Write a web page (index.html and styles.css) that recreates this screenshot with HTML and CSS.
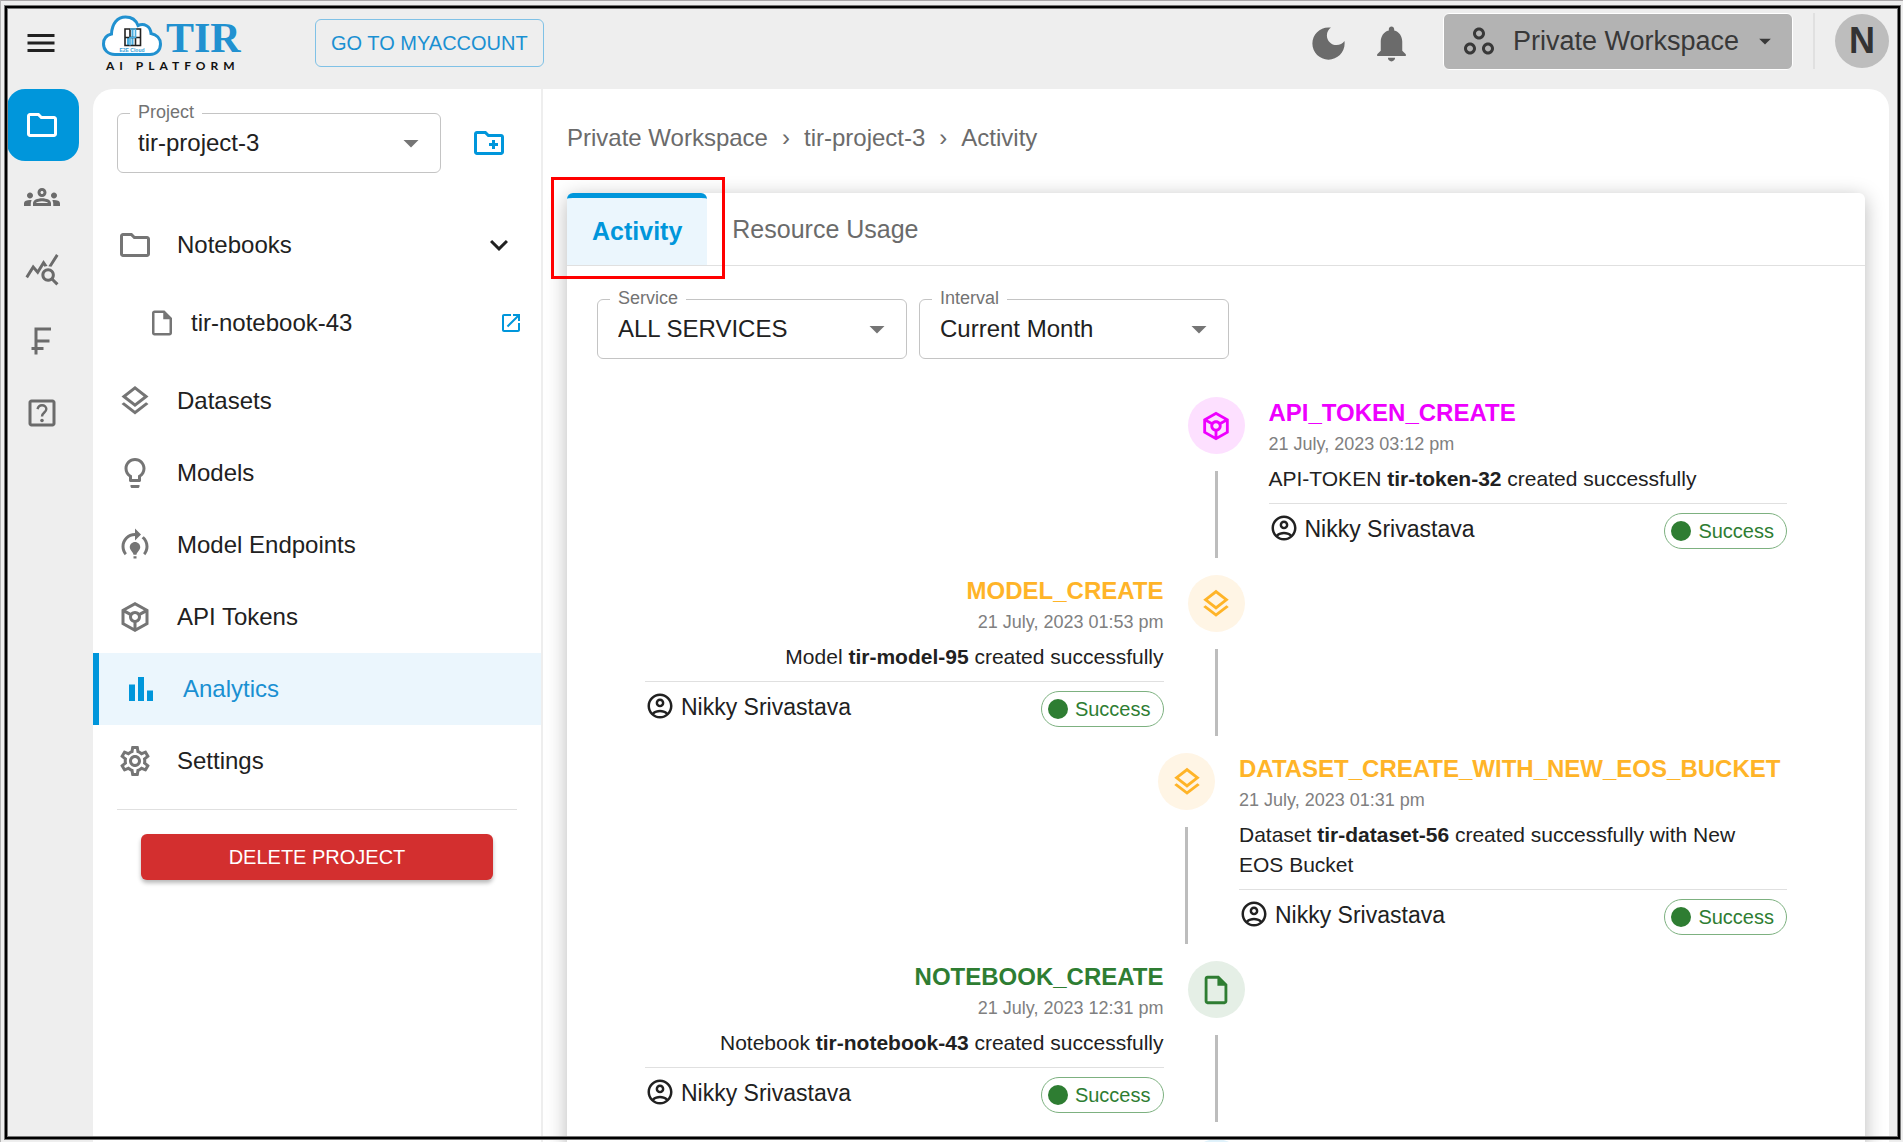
FILE: index.html
```html
<!DOCTYPE html>
<html lang="en">
<head>
<meta charset="utf-8">
<meta name="viewport" content="width=device-width, initial-scale=1">
<title>TIR AI Platform - Activity</title>
<link rel="stylesheet" href="styles.css">
</head>
<body>
<svg class="sprite" aria-hidden="true">
  <symbol id="i-menu" viewBox="0 0 24 24"><path d="M3 18h18v-2H3v2zm0-5h18v-2H3v2zm0-7v2h18V6H3z"/></symbol>
  <symbol id="i-folder" viewBox="0 0 24 24"><path d="M9.17 6l2 2H20v10H4V6h5.17M10 4H4c-1.1 0-1.99.9-1.99 2L2 18c0 1.1.9 2 2 2h16c1.1 0 2-.9 2-2V8c0-1.1-.9-2-2-2h-8l-2-2z"/></symbol>
  <symbol id="i-folder-add" viewBox="0 0 24 24"><path d="M20 6h-8l-2-2H4c-1.11 0-1.99.89-1.99 2L2 18c0 1.11.89 2 2 2h16c1.11 0 2-.89 2-2V8c0-1.11-.89-2-2-2zm0 12H4V6h5.17l2 2H20v10zm-8-4h2v2h2v-2h2v-2h-2v-2h-2v2h-2z"/></symbol>
  <symbol id="i-groups" viewBox="0 0 24 24"><path d="M4 13c1.1 0 2-.9 2-2s-.9-2-2-2-2 .9-2 2 .9 2 2 2zm1.13 1.1c-.37-.06-.74-.1-1.13-.1-.99 0-1.93.21-2.78.58C.48 14.9 0 15.62 0 16.43V18h4.5v-1.61c0-.83.23-1.61.63-2.29zM20 13c1.1 0 2-.9 2-2s-.9-2-2-2-2 .9-2 2 .9 2 2 2zm4 3.43c0-.81-.48-1.53-1.22-1.85-.85-.37-1.79-.58-2.78-.58-.39 0-.76.04-1.13.1.4.68.63 1.46.63 2.29V18H24v-1.57zm-7.76-2.78c-1.17-.52-2.61-.9-4.24-.9-1.63 0-3.07.39-4.24.9C6.68 14.13 6 15.21 6 16.39V18h12v-1.61c0-1.18-.68-2.26-1.76-2.74zM8.07 16c.09-.23.13-.39.91-.69.97-.38 1.99-.56 3.02-.56s2.05.18 3.02.56c.77.3.81.46.91.69H8.07zM12 8c.55 0 1 .45 1 1s-.45 1-1 1-1-.45-1-1 .45-1 1-1m0-2c-1.66 0-3 1.34-3 3s1.34 3 3 3 3-1.34 3-3-1.34-3-3-3z"/></symbol>
  <symbol id="i-stats" viewBox="0 0 24 24"><path d="M19.88 18.47c.44-.7.7-1.51.7-2.39 0-2.49-2.01-4.5-4.5-4.5s-4.5 2.01-4.5 4.5 2.01 4.5 4.49 4.5c.88 0 1.7-.26 2.39-.7L21.58 23 23 21.58l-3.12-3.11zm-3.8.11c-1.38 0-2.5-1.12-2.5-2.5s1.12-2.5 2.5-2.5 2.5 1.12 2.5 2.5-1.12 2.5-2.5 2.5zm-.36-8.5c-.74.02-1.45.18-2.1.45l-.55-.83-3.8 6.18-3.01-3.52-3.63 5.81L1 17l5-8 3 3.5L13 6l2.72 4.08zm2.59.5c-.64-.28-1.33-.45-2.05-.49L21.38 2 23 3.18l-4.69 7.4z"/></symbol>
  <symbol id="i-franc" viewBox="0 0 24 24"><path d="M18 5V3H7v13H5v2h2v3h2v-3h4v-2H9v-3h8v-2H9V5h9z"/></symbol>
  <symbol id="i-help" viewBox="0 0 24 24"><path d="M19 3H5c-1.1 0-2 .9-2 2v14c0 1.1.9 2 2 2h14c1.1 0 2-.9 2-2V5c0-1.1-.9-2-2-2zm0 16H5V5h14v14z"/><circle cx="12" cy="17" r="1.2"/><path d="M9 9.4c.4-1.6 1.5-2.6 3-2.6 1.7 0 2.9 1.1 2.9 2.6 0 2.2-2.9 2.4-2.9 4.9" fill="none" stroke="currentColor" stroke-width="1.6"/></symbol>
  <symbol id="i-file" viewBox="0 0 24 24"><path d="M14 2H6c-1.1 0-1.99.9-1.99 2L4 20c0 1.1.89 2 1.99 2H18c1.1 0 2-.9 2-2V8l-6-6zM6 20V4h7v5h5v11H6z"/></symbol>
  <symbol id="i-open" viewBox="0 0 24 24"><path d="M19 19H5V5h7V3H5c-1.11 0-2 .9-2 2v14c0 1.1.89 2 2 2h14c1.1 0 2-.9 2-2v-7h-2v7zM14 3v2h3.59l-9.83 9.83 1.41 1.41L19 6.41V10h2V3h-7z"/></symbol>
  <symbol id="i-layers" viewBox="0 0 24 24"><path d="M11.99 18.54l-7.37-5.73L3 14.07l9 7 9-7-1.63-1.27zM12 16l7.36-5.73L21 9l-9-7-9 7 1.63 1.27L12 16zm0-11.47L17.74 9 12 13.47 6.26 9 12 4.53z"/></symbol>
  <symbol id="i-bulb" viewBox="0 0 24 24"><path d="M9 21c0 .55.45 1 1 1h4c.55 0 1-.45 1-1v-1H9v1zm3-19C8.14 2 5 5.14 5 9c0 2.38 1.19 4.47 3 5.74V17c0 .55.45 1 1 1h6c.55 0 1-.45 1-1v-2.26c1.81-1.27 3-3.36 3-5.74 0-3.86-3.14-7-7-7zm2.85 11.1l-.85.6V16h-4v-2.3l-.85-.6C7.8 12.16 7 10.63 7 9c0-2.76 2.24-5 5-5s5 2.24 5 5c0 1.63-.8 3.16-2.15 4.1z"/></symbol>
  <symbol id="i-training" viewBox="0 0 24 24"><path d="M15.5 13.5c0 2-2.5 3.5-2.5 5h-2c0-1.5-2.5-3-2.5-5 0-1.93 1.57-3.5 3.5-3.5s3.5 1.57 3.5 3.5zm-2.5 6h-2V21h2v-1.5zm6-6.5c0 1.68-.59 3.21-1.58 4.42l1.42 1.42C20.18 17.27 21 15.23 21 13c0-2.74-1.23-5.19-3.16-6.84l-1.42 1.42C17.99 8.86 19 10.82 19 13zm-3-8l-4-4v3c-4.97 0-9 4.03-9 9 0 2.23.82 4.27 2.16 5.84l1.42-1.42C5.59 16.21 5 14.68 5 13c0-3.86 3.14-7 7-7v3l4-4z"/></symbol>
  <symbol id="i-token" viewBox="0 0 24 24"><path d="M21 7 12 2 3 7v10l9 5 9-5V7zm-9-2.71 5.91 3.28-3.01 1.67C14.17 8.48 13.14 8 12 8s-2.17.48-2.9 1.24L6.09 7.57 12 4.29zm-1 14.87-6-3.33V9.26L8.13 11c-.08.31-.13.65-.13 1 0 1.86 1.27 3.43 3 3.87v3.29zM10 12c0-1.1.9-2 2-2s2 .9 2 2-.9 2-2 2-2-.9-2-2zm3 7.16v-3.28c1.73-.44 3-2.01 3-3.87 0-.35-.05-.69-.13-1.01L19 9.26v6.57l-6 3.33z"/></symbol>
  <symbol id="i-bars" viewBox="0 0 24 24"><path d="M4 9h4v11H4zM16 13h4v7h-4zM10 4h4v16h-4z"/></symbol>
  <symbol id="i-gear" viewBox="0 0 24 24"><path d="M19.43 12.98c.04-.32.07-.64.07-.98 0-.34-.03-.66-.07-.98l2.11-1.65c.19-.15.24-.42.12-.64l-2-3.46c-.09-.16-.26-.25-.44-.25-.06 0-.12.01-.17.03l-2.49 1c-.52-.4-1.08-.73-1.69-.98l-.38-2.65C14.46 2.18 14.25 2 14 2h-4c-.25 0-.46.18-.49.42l-.38 2.65c-.61.25-1.17.59-1.69.98l-2.49-1c-.06-.02-.12-.03-.18-.03-.17 0-.34.09-.43.25l-2 3.46c-.13.22-.07.49.12.64l2.11 1.65c-.04.32-.07.65-.07.98 0 .33.03.66.07.98l-2.11 1.65c-.19.15-.24.42-.12.64l2 3.46c.09.16.26.25.44.25.06 0 .12-.01.17-.03l2.49-1c.52.4 1.08.73 1.69.98l.38 2.65c.03.24.24.42.49.42h4c.25 0 .46-.18.49-.42l.38-2.65c.61-.25 1.17-.59 1.69-.98l2.49 1c.06.02.12.03.18.03.17 0 .34-.09.43-.25l2-3.46c.12-.22.07-.49-.12-.64l-2.11-1.65zm-1.98-1.71c.04.31.05.52.05.73 0 .21-.02.43-.05.73l-.14 1.13.89.7 1.08.84-.7 1.21-1.27-.51-1.04-.42-.9.68c-.43.32-.84.56-1.25.73l-1.06.43-.16 1.13-.2 1.35h-1.4l-.19-1.35-.16-1.13-1.06-.43c-.43-.18-.83-.41-1.23-.71l-.91-.7-1.06.43-1.27.51-.7-1.21 1.08-.84.89-.7-.14-1.13c-.03-.31-.05-.54-.05-.74s.02-.43.05-.73l.14-1.13-.89-.7-1.08-.84.7-1.21 1.27.51 1.04.42.9-.68c.43-.32.84-.56 1.25-.73l1.06-.43.16-1.13.2-1.35h1.39l.19 1.35.16 1.13 1.06.43c.43.18.83.41 1.23.71l.91.7 1.06-.43 1.27-.51.7 1.21-1.07.85-.89.7.14 1.13zM12 8c-2.21 0-4 1.79-4 4s1.79 4 4 4 4-1.79 4-4-1.79-4-4-4zm0 6c-1.1 0-2-.9-2-2s.9-2 2-2 2 .9 2 2-.9 2-2 2z"/></symbol>
  <symbol id="i-chevron" viewBox="0 0 24 24"><path d="M7.41 8.59 12 13.17l4.59-4.58L18 10l-6 6-6-6 1.41-1.41z"/></symbol>
  <symbol id="i-drop" viewBox="0 0 24 24"><path d="M7 10l5 5 5-5z"/></symbol>
  <symbol id="i-moon" viewBox="0 0 24 24"><path d="M12 3c-4.97 0-9 4.03-9 9s4.03 9 9 9 9-4.03 9-9c0-.46-.04-.92-.1-1.36-.98 1.37-2.58 2.26-4.4 2.26-2.98 0-5.4-2.42-5.4-5.4 0-1.81.89-3.42 2.26-4.4-.44-.06-.9-.1-1.36-.1z"/></symbol>
  <symbol id="i-bell" viewBox="0 0 24 24"><path d="M12 22c1.1 0 2-.9 2-2h-4c0 1.1.89 2 2 2zm6-6v-5c0-3.07-1.64-5.64-4.5-6.32V4c0-.83-.67-1.5-1.5-1.5s-1.5.67-1.5 1.5v.68C7.63 5.36 6 7.92 6 11v5l-2 2v1h16v-1l-2-2z"/></symbol>
  <symbol id="i-spaces" viewBox="0 0 24 24"><path d="M6 15c1.1 0 2 .9 2 2s-.9 2-2 2-2-.9-2-2 .9-2 2-2m0-2c-2.2 0-4 1.8-4 4s1.8 4 4 4 4-1.8 4-4-1.8-4-4-4zm6-8c1.1 0 2 .9 2 2s-.9 2-2 2-2-.9-2-2 .9-2 2-2m0-2C9.8 3 8 4.8 8 7s1.8 4 4 4 4-1.8 4-4-1.8-4-4-4zm6 12c1.1 0 2 .9 2 2s-.9 2-2 2-2-.9-2-2 .9-2 2-2m0-2c-2.2 0-4 1.8-4 4s1.8 4 4 4 4-1.8 4-4-1.8-4-4-4z"/></symbol>
  <symbol id="i-user" viewBox="0 0 24 24"><path d="M12 2C6.48 2 2 6.48 2 12s4.48 10 10 10 10-4.48 10-10S17.52 2 12 2zM7.35 18.5C8.66 17.56 10.26 17 12 17s3.34.56 4.65 1.5c-1.31.94-2.91 1.5-4.65 1.5s-3.34-.56-4.65-1.5zm10.79-1.38C16.45 15.8 14.32 15 12 15s-4.45.8-6.14 2.12C4.7 15.73 4 13.95 4 12c0-4.42 3.58-8 8-8s8 3.58 8 8c0 1.95-.7 3.73-1.86 5.12zM12 6c-1.93 0-3.5 1.57-3.5 3.5S10.07 13 12 13s3.5-1.57 3.5-3.5S13.93 6 12 6zm0 5c-.83 0-1.5-.67-1.5-1.5S11.17 8 12 8s1.5.67 1.5 1.5S12.83 11 12 11z"/></symbol>
</svg>

<div class="app">
  <header class="topbar">
    <button class="icon-btn menu-btn" type="button" aria-label="Menu"><svg class="icon"><use href="#i-menu"/></svg></button>
    <a class="logo" href="#" aria-label="TIR AI Platform">
      <svg viewBox="0 0 146 60" width="146" height="60">
        <path d="M14 41.5C6.500 41.5 2.500 36.5 2.500 31c0-5.500 3.500-9 8-10C11 10.5 16.500 4 24.500 4c6 0 10.500 3 12.500 8.500 6-2.500 12.500.5 13 8 5.500 1 9.500 5 9.500 10.500 0 6-4 10.500-10.500 10.500z" fill="#fff" stroke="#2191d0" stroke-width="3"/>
        <path d="M31.500 16v16.500M27 24.500v8" stroke="#4aaee0" stroke-width="2"/>
        <path d="M24 16h15.500v16.500H24zM24 24.500h15.500M29 16v8.500M34.500 24.500v8" fill="none" stroke="#222" stroke-width="1.600"/>
        <path d="M29 16h5.500v8.500H29v8" fill="none" stroke="#4aaee0" stroke-width="1.600"/>
        <text class="logo-tiny" x="31" y="39" text-anchor="middle">E2E Cloud</text>
        <text class="logo-name" x="65" y="39">TIR</text>
        <text class="logo-sub" x="5" y="57">AI PLATFORM</text>
      </svg>
    </a>
    <a class="account-link" href="#">GO TO MYACCOUNT</a>
    <div class="tools">
      <button class="icon-btn" type="button" aria-label="Dark mode"><svg class="icon icon-lg"><use href="#i-moon"/></svg></button>
      <button class="icon-btn" type="button" aria-label="Notifications"><svg class="icon icon-lg"><use href="#i-bell"/></svg></button>
      <button class="workspace" type="button"><svg class="icon"><use href="#i-spaces"/></svg><span>Private Workspace</span><svg class="icon icon-sm"><use href="#i-drop"/></svg></button>
      <span class="rule"></span>
      <button class="avatar" type="button" aria-label="Account N">N</button>
    </div>
  </header>

  <div class="body">
    <nav class="rail" aria-label="Sections">
      <a class="rail-item active" href="#" aria-label="Projects"><svg class="icon"><use href="#i-folder"/></svg></a>
      <a class="rail-item" href="#" aria-label="Teams"><svg class="icon"><use href="#i-groups"/></svg></a>
      <a class="rail-item" href="#" aria-label="Usage"><svg class="icon"><use href="#i-stats"/></svg></a>
      <a class="rail-item" href="#" aria-label="Billing"><svg class="icon"><use href="#i-franc"/></svg></a>
      <a class="rail-item" href="#" aria-label="Help"><svg class="icon"><use href="#i-help"/></svg></a>
    </nav>

    <div class="panel">
      <aside class="sidebar">
        <div class="project">
          <div class="field">
            <label for="project">Project</label>
            <select id="project"><option>tir-project-3</option></select>
            <svg class="icon"><use href="#i-drop"/></svg>
          </div>
          <button class="icon-btn accent" type="button" aria-label="New project"><svg class="icon"><use href="#i-folder-add"/></svg></button>
        </div>
        <nav class="menu" aria-label="Project">
          <a class="menu-item" href="#"><svg class="icon"><use href="#i-folder"/></svg><span>Notebooks</span><svg class="icon dark"><use href="#i-chevron"/></svg></a>
          <a class="menu-item sub" href="#"><svg class="icon icon-md"><use href="#i-file"/></svg><span>tir-notebook-43</span><svg class="icon icon-xs accent"><use href="#i-open"/></svg></a>
          <a class="menu-item" href="#"><svg class="icon"><use href="#i-layers"/></svg><span>Datasets</span></a>
          <a class="menu-item" href="#"><svg class="icon"><use href="#i-bulb"/></svg><span>Models</span></a>
          <a class="menu-item" href="#"><svg class="icon"><use href="#i-training"/></svg><span>Model Endpoints</span></a>
          <a class="menu-item" href="#"><svg class="icon"><use href="#i-token"/></svg><span>API Tokens</span></a>
          <a class="menu-item active" href="#"><svg class="icon"><use href="#i-bars"/></svg><span>Analytics</span></a>
          <a class="menu-item" href="#"><svg class="icon"><use href="#i-gear"/></svg><span>Settings</span></a>
        </nav>
        <div class="danger">
          <button class="delete" type="button">DELETE PROJECT</button>
        </div>
      </aside>

      <main class="main">
        <nav class="crumbs" aria-label="Breadcrumb"><a href="#">Private Workspace</a><span>›</span><a href="#">tir-project-3</a><span>›</span><a href="#">Activity</a></nav>
        <section class="card">
          <div class="tabs" role="tablist">
            <button class="tab active" type="button" role="tab" aria-selected="true">Activity</button>
            <button class="tab" type="button" role="tab" aria-selected="false">Resource Usage</button>
            <span class="marker"></span>
          </div>
          <div class="filters">
            <div class="field">
              <label for="service">Service</label>
              <select id="service"><option>ALL SERVICES</option></select>
              <svg class="icon"><use href="#i-drop"/></svg>
            </div>
            <div class="field">
              <label for="interval">Interval</label>
              <select id="interval"><option>Current Month</option></select>
              <svg class="icon"><use href="#i-drop"/></svg>
            </div>
          </div>

          <ol class="timeline">
            <li class="event pink">
              <div class="track"><span class="dot"><svg class="icon"><use href="#i-token"/></svg></span><span class="line"></span></div>
              <article class="entry">
                <h3>API_TOKEN_CREATE</h3>
                <time>21 July, 2023 03:12 pm</time>
                <p>API-TOKEN <b>tir-token-32</b> created successfully</p>
                <footer><svg class="icon icon-md"><use href="#i-user"/></svg><span class="who">Nikky Srivastava</span><span class="chip">Success</span></footer>
              </article>
            </li>
            <li class="event amber left">
              <div class="track"><span class="dot"><svg class="icon"><use href="#i-layers"/></svg></span><span class="line"></span></div>
              <article class="entry">
                <h3>MODEL_CREATE</h3>
                <time>21 July, 2023 01:53 pm</time>
                <p>Model <b>tir-model-95</b> created successfully</p>
                <footer><svg class="icon icon-md"><use href="#i-user"/></svg><span class="who">Nikky Srivastava</span><span class="chip">Success</span></footer>
              </article>
            </li>
            <li class="event amber wide">
              <div class="track"><span class="dot"><svg class="icon"><use href="#i-layers"/></svg></span><span class="line"></span></div>
              <article class="entry">
                <h3>DATASET_CREATE_WITH_NEW_EOS_BUCKET</h3>
                <time>21 July, 2023 01:31 pm</time>
                <p>Dataset <b>tir-dataset-56</b> created successfully with New<br>EOS Bucket</p>
                <footer><svg class="icon icon-md"><use href="#i-user"/></svg><span class="who">Nikky Srivastava</span><span class="chip">Success</span></footer>
              </article>
            </li>
            <li class="event green left">
              <div class="track"><span class="dot"><svg class="icon"><use href="#i-file"/></svg></span><span class="line"></span></div>
              <article class="entry">
                <h3>NOTEBOOK_CREATE</h3>
                <time>21 July, 2023 12:31 pm</time>
                <p>Notebook <b>tir-notebook-43</b> created successfully</p>
                <footer><svg class="icon icon-md"><use href="#i-user"/></svg><span class="who">Nikky Srivastava</span><span class="chip">Success</span></footer>
              </article>
            </li>
            <li class="event blue">
              <div class="track"><span class="dot"><svg class="icon"><use href="#i-folder"/></svg></span><span class="line"></span></div>
              <div class="entry"></div>
            </li>
          </ol>
        </section>
      </main>
    </div>
  </div>
</div>
<div class="frame" aria-hidden="true"></div>
</body>
</html>
```
FILE: styles.css
```css
:root {
  --blue: #0096db;
  --text: #212121;
  --muted: #6b6b6b;
  --line: #e0e0e0;
  --gray: #eeeeee;
  --green: #2e7d32;
}

* { box-sizing: border-box; }

body {
  margin: 0;
  background: var(--gray);
  color: var(--text);
  font-family: "Liberation Sans", Arial, sans-serif;
  font-size: 24px;
}

a { color: inherit; text-decoration: none; }
button { font: inherit; color: inherit; border: 0; background: none; padding: 0; cursor: pointer; }

.sprite { display: none; }
.icon { width: 36px; height: 36px; flex: none; display: block; fill: currentColor; }
.icon-lg { width: 43px; height: 43px; }
.icon-md { width: 30px; height: 30px; }
.icon-sm { width: 28px; height: 28px; }
.icon-xs { width: 24px; height: 24px; }
.accent { color: var(--blue); }
.dark { color: var(--text); }

.app {
  height: 100vh;
  overflow: hidden;
  display: flex;
  flex-direction: column;
  border-top: 1px solid #a9a6a8;
  border-left: 1px solid #b5b5b5;
}

/* Top bar */
.topbar {
  flex: none;
  height: 88px;
  padding: 0 14px 4px 22px;
  display: flex;
  align-items: center;
}
.logo { margin-left: 42px; display: block; }
.logo svg { display: block; }
.logo-tiny { font: bold 5px "Liberation Sans", sans-serif; fill: #3a9fd8; }
.logo-name { font: bold 42px "Liberation Serif", serif; fill: #2191d0; }
.logo-sub { font: bold 12px Lato, sans-serif; letter-spacing: 5px; fill: #111; }
.account-link {
  margin-left: 68px;
  height: 48px;
  padding: 0 15px;
  display: flex;
  align-items: center;
  border: 1px solid #7fc1e6;
  border-radius: 6px;
  color: #1a90d2;
  font-size: 20px;
}
.tools { margin: 0 0 4px auto; display: flex; align-items: center; gap: 20px; }
.workspace {
  height: 57px;
  margin-left: 10px;
  padding: 0 17px;
  display: flex;
  align-items: center;
  gap: 16px;
  border: 1px solid #fff;
  border-radius: 6px;
  background: #b3b3b3;
  color: #383838;
  font-size: 27px;
}
.tools > .icon-btn { color: #6b6b6b; padding-top: 4px; }
.workspace .icon-sm { margin-right: -4px; margin-left: -4px; }
.rule { width: 2px; height: 56px; background: var(--line); }
.avatar {
  width: 54px;
  height: 54px;
  border-radius: 50%;
  background: #bdbdbd;
  color: #333;
  font-size: 36px;
  font-weight: bold;
}

/* Rail and panel */
.body { flex: 1; min-height: 0; display: flex; padding-right: 14px; }
.rail { width: 92px; flex: none; padding-left: 6px; color: #6b6b6b; }
.rail-item { width: 72px; height: 72px; padding-right: 2px; display: grid; place-items: center; }
.rail-item.active { background: var(--blue); color: #fff; border-radius: 18px; }
.panel {
  flex: 1;
  min-width: 0;
  display: flex;
  background: #fff;
  border-radius: 20px 20px 0 0;
}

/* Sidebar */
.sidebar { width: 450px; flex: none; padding-top: 24px; border-right: 2px solid var(--gray); }
.project { display: flex; align-items: center; padding: 0 34px 0 24px; justify-content: space-between; }
.project .field { width: 324px; }

.field { position: relative; display: grid; align-items: center; }
.field label {
  position: absolute;
  top: -11px;
  left: 13px;
  padding: 0 8px;
  background: #fff;
  color: #737373;
  font-size: 18px;
  line-height: 20px;
}
.field select {
  grid-area: 1 / 1;
  width: 100%;
  height: 60px;
  padding: 0 48px 2px 20px;
  border: 1px solid #c4c4c4;
  border-radius: 6px;
  background: none;
  color: var(--text);
  font: inherit;
  appearance: none;
}
.field .icon { grid-area: 1 / 1; justify-self: end; margin-right: 12px; color: #757575; pointer-events: none; }

.menu { margin-top: 36px; }
.menu-item {
  height: 72px;
  padding: 0 24px;
  display: flex;
  align-items: center;
  gap: 24px;
}
.menu-item > .icon:first-child { color: #757575; }
.menu-item span { flex: 1; }
.menu-item.sub { height: 84px; padding: 0 18px 0 54px; gap: 14px; }
.menu-item.active { border-left: 6px solid var(--blue); background: #ebf6fd; color: #1a90d2; }
.menu-item.active > .icon:first-child { color: var(--blue); }
.danger { margin: 12px 24px 0; padding: 24px; border-top: 1px solid var(--line); }
.delete {
  width: 100%;
  height: 46px;
  border-radius: 6px;
  background: #d32f2f;
  color: #fff;
  font-size: 20px;
  box-shadow: 0 3px 4px rgba(0, 0, 0, .28);
}

/* Main */
.main { flex: 1; min-width: 0; padding: 31px 24px 0; }
.crumbs { display: flex; gap: 14px; line-height: 36px; color: #6b6b6b; }
.card {
  margin-top: 37px;
  border-radius: 6px;
  background: #fff;
  box-shadow: 0 4px 20px rgba(0, 0, 0, .28);
}
.tabs { position: relative; display: flex; height: 73px; border-bottom: 1px solid var(--line); font-size: 25px; }
.tab { padding: 0 25px; color: #6b6b6b; }
.tab.active {
  border-top: 5px solid var(--blue);
  border-radius: 6px 6px 0 0;
  background: #ebf6fd;
  color: var(--blue);
  font-weight: bold;
}
.marker {
  position: absolute;
  top: -16px;
  left: -16px;
  width: 174px;
  height: 102px;
  border: 3px solid #f00;
}
.filters { display: flex; gap: 12px; padding: 33px 30px 0; }
.filters .field { width: 310px; }

/* Timeline */
.timeline { list-style: none; margin: 0; padding: 21px 54px 0; }
.event { display: flex; }
.event::before { content: ""; flex: 1; padding: 0 24px; }
.event.left { flex-direction: row-reverse; }
.track { display: flex; flex-direction: column; align-items: center; }
.dot {
  width: 57px;
  height: 57px;
  margin: 17px 0;
  border-radius: 50%;
  display: grid;
  place-items: center;
}
.dot .icon { width: 34px; height: 34px; }
.line { flex: 1; width: 3px; background: #bdbdbd; }
.entry { flex: 1; padding: 15px 24px 9px; }
.wide .entry { min-width: 596px; }
.entry h3 { margin: 0; font-size: 24px; line-height: 36px; }
.entry time { display: block; color: #808080; font-size: 18px; line-height: 26px; }
.entry p { margin: 7px 0 9px; font-size: 21px; line-height: 30px; }
.entry footer {
  display: flex;
  align-items: flex-start;
  gap: 6px;
  padding-top: 9px;
  border-top: 1px solid var(--line);
}
.left h3, .left time, .left p { text-align: right; }
.who { flex: 1; font-size: 23px; line-height: 32px; }
.chip {
  height: 36px;
  padding: 0 12px 0 6px;
  display: flex;
  align-items: center;
  gap: 7px;
  border: 1px solid #7db180;
  border-radius: 18px;
  color: var(--green);
  font-size: 20px;
}
.chip::before { content: ""; width: 20px; height: 20px; border-radius: 50%; background: var(--green); }

.pink h3, .pink .dot { color: #ee00ff; }
.pink .dot { background: #fde0ff; }
.amber h3, .amber .dot { color: #ffb428; }
.amber .dot { background: #fff5e5; }
.green h3, .green .dot { color: var(--green); }
.green .dot { background: #e5efe6; }
.blue .dot { color: var(--blue); background: #e0f2fb; }

/* Window outline drawn over the page */
.frame {
  position: fixed;
  inset: 6px 3px 3px 5px;
  border: 2px solid #000;
  box-shadow: 0 0 0 1px #777, inset 0 0 0 1px #777;
  pointer-events: none;
}
```
